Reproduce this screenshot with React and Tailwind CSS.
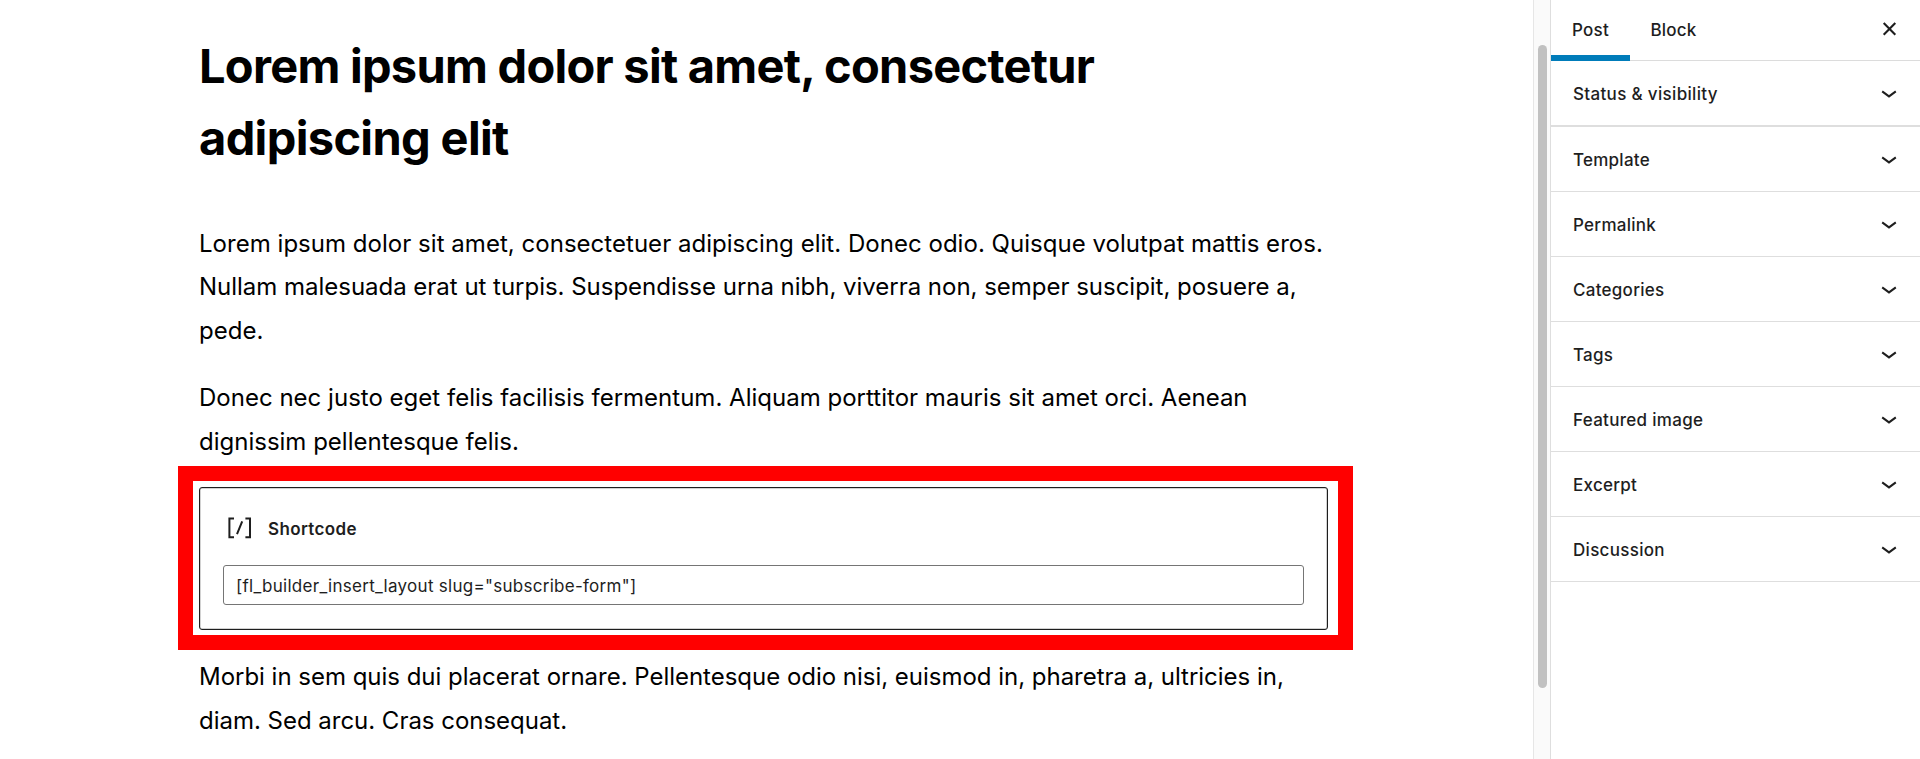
const panels = [
  { label: 'Status & visibility', row: 'h-[66px] border-b-2', spacing: 'tracking-[0.33px]' },
  { label: 'Template', row: 'h-[65px] border-b', spacing: 'tracking-[0.25px]' },
  { label: 'Permalink', row: 'h-[65px] border-b', spacing: 'tracking-[0.27px]' },
  { label: 'Categories', row: 'h-[65px] border-b', spacing: 'tracking-[0.27px]' },
  { label: 'Tags', row: 'h-[65px] border-b', spacing: 'tracking-[0.2px]' },
  { label: 'Featured image', row: 'h-[65px] border-b', spacing: 'tracking-[0.3px]' },
  { label: 'Excerpt', row: 'h-[65px] border-b', spacing: 'tracking-[0.27px]' },
  { label: 'Discussion', row: 'h-[65px] border-b', spacing: 'tracking-[0.3px]' },
];

function Chevron() {
  return (
    <svg className="mr-[23px] mt-[3px] h-[9px] w-4" viewBox="0 0 16 9" fill="none" stroke="#1e1e1e" strokeWidth="2">
      <path d="M1.2 1.4 8 6.4l6.8-5" />
    </svg>
  );
}

function Sidebar() {
  return (
    <aside className="flex w-[370px] shrink-0 flex-col border-l border-[#dedede] text-[17px] font-medium text-[#1e1e1e]">
      <header className="flex h-[61px] shrink-0 justify-between border-b border-[#dcdcdc]">
        <div className="flex">
          <button className="-mb-px flex w-[79px] justify-center border-b-[6px] border-[#007cba] pt-[20px] leading-5 tracking-[0.2px]">
            Post
          </button>
          <button className="flex pl-[20.5px] pt-[20px] leading-5 tracking-[0.2px]">Block</button>
        </div>
        <svg className="mr-[23px] mt-[22px] h-[14px] w-[15px]" viewBox="0 0 15 14" fill="none" stroke="#1e1e1e" strokeWidth="2.1">
          <path d="m1.7 1.1 11.6 11.6M13.3 1.1 1.7 12.7" />
        </svg>
      </header>
      {panels.map(({ label, row, spacing }) => (
        <button key={label} className={`flex shrink-0 items-center justify-between border-[#dedede] pl-[22px] ${row}`}>
          <span className={`pt-[2px] leading-5 ${spacing}`}>{label}</span>
          <Chevron />
        </button>
      ))}
    </aside>
  );
}

function ShortcodeBlock() {
  return (
    <div className="-ml-[21px] mt-[3px] h-[184px] w-[1175px] border-[15px] border-[#ff0000] px-[6px] pb-[5px] pt-[6px]">
      <div className="mr-[4px] flex h-[143px] flex-col rounded-[3px] border border-[#1e1e1e] px-[23px] pt-[26px] text-[17px] text-[#1e1e1e] shadow-[inset_0_0_0_0.5px_#1e1e1e66]">
        <div className="flex h-[28px] items-center">
          <svg className="ml-[4px] h-[22px] w-[25px]" viewBox="0 0 25 22" fill="none" stroke="#1e1e1e" strokeWidth="2">
            <path d="M7 1.4H2.4v18.8H7M18.4 1.4H23v18.8h-4.6M10 17.2l5.2-12.8" />
          </svg>
          <span className="ml-[16px] pt-px font-semibold leading-5 tracking-[0.36px]">Shortcode</span>
        </div>
        <div className="mt-[23px] flex h-[40px] items-center rounded-[3px] border border-[#757575] pl-[12px]">
          <span className="whitespace-nowrap pt-[2px] leading-5 tracking-[0.28px]">
            [fl_builder_insert_layout slug="subscribe-form"]
          </span>
        </div>
      </div>
    </div>
  );
}

export default function App() {
  return (
    <div className="flex h-[759px] overflow-hidden bg-white font-[Inter,sans-serif] text-black">
      <main className="flex w-[1533px] shrink-0 flex-col whitespace-nowrap pl-[199px] pt-[30px] text-[24px] leading-[43.4px]">
        <h1 className="h-[144px] text-[47px] font-bold leading-[72px]">
          <span className="block tracking-[-0.74px]">Lorem ipsum dolor sit amet, consectetur</span>
          <span className="block tracking-[-0.66px]">adipiscing elit</span>
        </h1>
        <p className="mt-[48px]">
          <span className="block tracking-[0.03px]">
            Lorem ipsum dolor sit amet, consectetuer adipiscing elit. Donec odio. Quisque volutpat mattis eros.
          </span>
          <span className="block tracking-[-0.02px]">
            Nullam malesuada erat ut turpis. Suspendisse urna nibh, viverra non, semper suscipit, posuere a,
          </span>
          <span className="block">pede.</span>
        </p>
        <p className="mt-[24px] h-[87px]">
          <span className="block tracking-[0.013px]">
            Donec nec justo eget felis facilisis fermentum. Aliquam porttitor mauris sit amet orci. Aenean
          </span>
          <span className="block">dignissim pellentesque felis.</span>
        </p>
        <ShortcodeBlock />
        <p className="mt-[5px]">
          <span className="block tracking-[-0.02px]">
            Morbi in sem quis dui placerat ornare. Pellentesque odio nisi, euismod in, pharetra a, ultricies in,
          </span>
          <span className="block tracking-[-0.02px]">diam. Sed arcu. Cras consequat.</span>
        </p>
      </main>
      <div className="w-[17px] shrink-0 border-l border-[#e6e6e6] bg-[#fafafa] pl-[4px] pt-[45px]">
        <div className="h-[643px] w-[9px] rounded-full bg-[#c1c1c1]" />
      </div>
      <Sidebar />
    </div>
  );
}
